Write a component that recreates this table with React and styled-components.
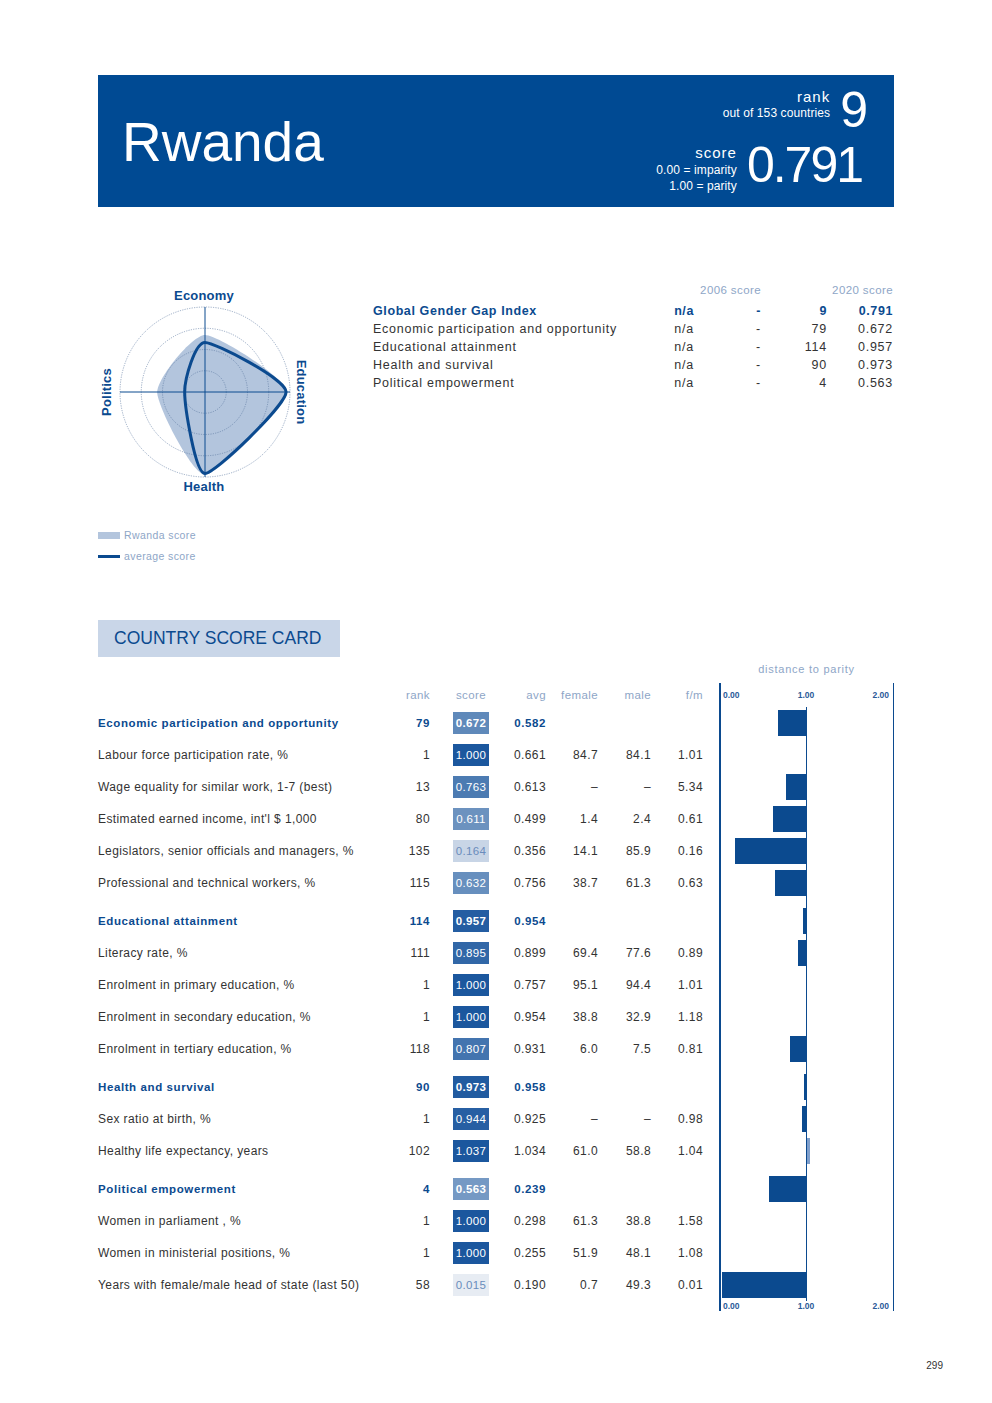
import React from "react";
import styled, { createGlobalStyle } from "styled-components";

const BLUE = "#0b4a8f";
const PALE = "#8ea6c7";

const GlobalStyle = createGlobalStyle`
  body {
    margin: 0;
    background: #fff;
    font-family: "Liberation Sans", Arial, sans-serif;
    color: #333;
  }
`;

const country = { econ: 0.672, edu: 0.957, health: 0.973, pol: 0.563 };
const average = { econ: 0.582, edu: 0.954, health: 0.958, pol: 0.239 };

const overview = [
  ["Global Gender Gap Index", "n/a", "-", "9", "0.791"],
  ["Economic participation and opportunity", "n/a", "-", "79", "0.672"],
  ["Educational attainment", "n/a", "-", "114", "0.957"],
  ["Health and survival", "n/a", "-", "90", "0.973"],
  ["Political empowerment", "n/a", "-", "4", "0.563"],
];

const sections = [
  {
    name: "Economic participation and opportunity",
    rank: 79, score: 0.672, avg: "0.582",
    rows: [
      ["Labour force participation rate, %", 1, 1.0, "0.661", "84.7", "84.1", "1.01"],
      ["Wage equality for similar work, 1-7 (best)", 13, 0.763, "0.613", "–", "–", "5.34"],
      ["Estimated earned income, int'l $ 1,000", 80, 0.611, "0.499", "1.4", "2.4", "0.61"],
      ["Legislators, senior officials and managers, %", 135, 0.164, "0.356", "14.1", "85.9", "0.16"],
      ["Professional and technical workers, %", 115, 0.632, "0.756", "38.7", "61.3", "0.63"],
    ],
  },
  {
    name: "Educational attainment",
    rank: 114, score: 0.957, avg: "0.954",
    rows: [
      ["Literacy rate, %", 111, 0.895, "0.899", "69.4", "77.6", "0.89"],
      ["Enrolment in primary education, %", 1, 1.0, "0.757", "95.1", "94.4", "1.01"],
      ["Enrolment in secondary education, %", 1, 1.0, "0.954", "38.8", "32.9", "1.18"],
      ["Enrolment in tertiary education, %", 118, 0.807, "0.931", "6.0", "7.5", "0.81"],
    ],
  },
  {
    name: "Health and survival",
    rank: 90, score: 0.973, avg: "0.958",
    rows: [
      ["Sex ratio at birth, %", 1, 0.944, "0.925", "–", "–", "0.98"],
      ["Healthy life expectancy, years", 102, 1.037, "1.034", "61.0", "58.8", "1.04"],
    ],
  },
  {
    name: "Political empowerment",
    rank: 4, score: 0.563, avg: "0.239",
    rows: [
      ["Women in parliament , %", 1, 1.0, "0.298", "61.3", "38.8", "1.58"],
      ["Women in ministerial positions, %", 1, 1.0, "0.255", "51.9", "48.1", "1.08"],
      ["Years with female/male head of state (last 50)", 58, 0.015, "0.190", "0.7", "49.3", "0.01"],
    ],
  },
];

const shade = (v) => {
  const t = Math.max(0, Math.min(1, v));
  const light = [234, 238, 244];
  const dark = [27, 87, 158];
  const c = light.map((l, i) => Math.round(l + (dark[i] - l) * t));
  return `rgb(${c.join(",")})`;
};

// closed catmull-rom, softened so the corners stay visible
const smooth = (p, k = 0.6) => {
  const n = p.length;
  let d = `M${p[0][0]},${p[0][1]}`;
  for (let i = 0; i < n; i++) {
    const p0 = p[(i - 1 + n) % n], p1 = p[i], p2 = p[(i + 1) % n], p3 = p[(i + 2) % n];
    const c1 = [p1[0] + ((p2[0] - p0[0]) / 6) * k, p1[1] + ((p2[1] - p0[1]) / 6) * k];
    const c2 = [p2[0] - ((p3[0] - p1[0]) / 6) * k, p2[1] - ((p3[1] - p1[1]) / 6) * k];
    d += ` C${c1[0]},${c1[1]} ${c2[0]},${c2[1]} ${p2[0]},${p2[1]}`;
  }
  return d + " Z";
};

const Page = styled.div`
  width: 992px;
  min-height: 1403px;
  box-sizing: border-box;
  padding: 75px 98px 0;
`;

const Banner = styled.header`
  height: 132px;
  background: #004a93;
  color: #fff;
  display: flex;
  justify-content: space-between;
  align-items: center;
  padding: 0 28px 0 24px;
  box-sizing: border-box;
`;

const Country = styled.h1`
  margin: 0;
  padding-top: 3px;
  font-size: 55px;
  font-weight: 400;
  line-height: 1;
`;

const Stats = styled.div`
  align-self: flex-start;
  padding-top: 13px;
  display: flex;
  flex-direction: column;
  align-items: flex-end;
  gap: 11px;
`;

const StatRow = styled.div`
  display: flex;
  align-items: flex-start;
  gap: 10px;
  margin-right: ${(p) => p.$shift || 0}px;
`;

const StatLabels = styled.div`
  text-align: right;
  padding-top: ${(p) => p.$top || 1}px;
  line-height: ${(p) => p.$lh || 16}px;
`;

const StatName = styled.div`
  font-size: 15px;
  letter-spacing: 1px;
`;

const StatNote = styled.div`
  font-size: 12px;
  letter-spacing: 0.1px;
`;

const BigNumber = styled.div`
  font-size: 50px;
  line-height: 44px;
  letter-spacing: -2px;
`;

const Overview = styled.section`
  margin-top: 75px;
  display: flex;
`;

const RadarColumn = styled.div`
  width: 275px;
  flex: none;
`;

const RadarSvg = styled.svg`
  display: block;
  text {
    font-family: "Liberation Sans", Arial, sans-serif;
    font-size: 13px;
    font-weight: 700;
    fill: ${BLUE};
    letter-spacing: 0.2px;
  }
`;

const Legend = styled.div`
  margin-top: 32px;
  display: flex;
  flex-direction: column;
  gap: 9px;
`;

const LegendItem = styled.div`
  display: flex;
  align-items: center;
  gap: 4px;
  font-size: 10.5px;
  line-height: 12px;
  letter-spacing: 0.4px;
  color: ${PALE};
`;

const Swatch = styled.span`
  width: 22px;
  height: ${(p) => (p.$line ? 3 : 7)}px;
  background: ${(p) => (p.$line ? BLUE : "#b3c5dd")};
`;

const SummaryTable = styled.div`
  flex: 1;
  display: grid;
  grid-template-columns: 1fr 62px 67px 66px 66px;
  grid-template-rows: 20px;
  grid-auto-rows: 18px;
  align-items: center;
  font-size: 12.5px;
  letter-spacing: 0.75px;
  padding-right: 1px;
`;

const SummaryHead = styled.div`
  grid-column: ${(p) => p.$col};
  justify-self: end;
  white-space: nowrap;
  align-self: start;
  font-size: 11.5px;
  letter-spacing: 0.4px;
  line-height: 16px;
  color: ${PALE};
`;

const SummaryCell = styled.div`
  text-align: ${(p) => (p.$left ? "left" : "right")};
  white-space: nowrap;
  font-weight: ${(p) => (p.$strong ? 700 : 400)};
  letter-spacing: ${(p) => (p.$strong ? "0.6px" : "inherit")};
  color: ${(p) => (p.$strong ? BLUE : "#333")};
`;

const CardTitle = styled.h2`
  margin: 58px 0 0;
  width: 242px;
  height: 37px;
  box-sizing: border-box;
  padding-left: 16px;
  display: flex;
  align-items: center;
  background: #c9d6e8;
  color: ${BLUE};
  font-size: 17.5px;
  font-weight: 400;
`;

const DistanceLabel = styled.div`
  margin: 5px 0 0 auto;
  width: 175px;
  text-align: center;
  font-size: 11px;
  line-height: 14px;
  letter-spacing: 0.75px;
  color: ${PALE};
`;

const COLUMNS = "302px 30px 59px 57px 52px 53px 52px 191px";

const Table = styled.div`
  margin-top: 7px;
`;

const Row = styled.div`
  display: grid;
  grid-template-columns: ${COLUMNS};
  height: ${(p) => p.$height}px;
  align-items: end;
`;

const Cell = styled.div`
  height: ${(p) => p.$h || 32}px;
  display: flex;
  align-items: center;
  justify-content: ${(p) => (p.$left ? "flex-start" : "flex-end")};
  white-space: nowrap;
  font-size: ${(p) => (p.$head || p.$strong ? "11.5px" : "12px")};
  letter-spacing: ${(p) => (p.$strong ? "0.6px" : "0.4px")};
  font-weight: ${(p) => (p.$strong ? 700 : 400)};
  color: ${(p) => (p.$head ? PALE : p.$strong ? BLUE : "#333")};
`;

const ScoreSlot = styled.span`
  width: 36px;
  text-align: center;
`;

const ScoreBadge = styled.span`
  width: 36px;
  height: 22px;
  display: flex;
  align-items: center;
  justify-content: center;
  font-size: 11.5px;
  letter-spacing: 0.3px;
  font-weight: ${(p) => (p.$strong ? 700 : 400)};
  background: ${(p) => shade(p.$value)};
  color: ${(p) => (p.$value >= 0.3 ? "#fff" : "#6a8cbc")};
`;

const ChartCell = styled.div`
  align-self: stretch;
  justify-self: end;
  width: 175px;
  box-sizing: border-box;
  border-left: 2px solid ${BLUE};
  border-right: 1px solid ${BLUE};
  display: flex;
  flex-direction: column;
  justify-content: flex-end;
  background: ${(p) =>
    p.$axis
      ? "none"
      : `linear-gradient(to right, transparent 85px, ${BLUE} 85px, ${BLUE} 86px, transparent 86px)`};
`;

const BarTrack = styled.div`
  height: 32px;
  display: flex;
  align-items: center;
`;

const Bar = styled.div`
  flex: none;
  height: 26px;
  background: ${(p) => (p.$over ? "#7f9fcc" : BLUE)};
`;

const AxisLabels = styled.div`
  height: ${(p) => p.$h}px;
  display: flex;
  align-items: center;
  justify-content: space-between;
  padding: 0 4px 0 2px;
  font-size: 8.5px;
  font-weight: 700;
  color: #2a5a98;
`;

const PageNumber = styled.div`
  margin: 49px -49px 0 0;
  text-align: right;
  font-size: 10px;
  line-height: 12px;
  color: #333;
`;

const UNIT = 85.5;

function ChartBar({ value }) {
  if (value === 1) return <BarTrack />;
  const over = value > 1;
  const style = over
    ? { marginLeft: 86, width: (value - 1) * UNIT }
    : { marginLeft: value * UNIT, width: (1 - value) * UNIT };
  return (
    <BarTrack>
      <Bar $over={over} style={style} />
    </BarTrack>
  );
}

function Radar() {
  const cx = 107, cy = 110, R = 85;
  const pts = (v) => [
    [cx, cy - R * v.econ],
    [cx + R * v.edu, cy],
    [cx, cy + R * v.health],
    [cx - R * v.pol, cy],
  ];
  return (
    <RadarSvg width="215" height="215" viewBox="0 0 215 215">
      <path d={smooth(pts(country))} fill="#b3c5dd" />
      {[0.25, 0.5, 0.75, 1].map((f) => (
        <circle key={f} cx={cx} cy={cy} r={R * f} fill="none" stroke="#5b77a0" strokeWidth="0.6" strokeDasharray="1.2 1.2" />
      ))}
      <line x1={cx - R} y1={cy} x2={cx + R} y2={cy} stroke={BLUE} strokeWidth="1" />
      <line x1={cx} y1={cy - R} x2={cx} y2={cy + R} stroke={BLUE} strokeWidth="1" />
      <path d={smooth(pts(average))} fill="none" stroke={BLUE} strokeWidth="3" strokeLinejoin="round" />
      <text x={cx - 1} y={15} textAnchor="middle" dominantBaseline="middle">Economy</text>
      <text x={cx - 1} y={206} textAnchor="middle" dominantBaseline="middle">Health</text>
      <text transform={`translate(10 ${cy}) rotate(-90)`} textAnchor="middle" dominantBaseline="middle">Politics</text>
      <text transform={`translate(202 ${cy}) rotate(90)`} textAnchor="middle" dominantBaseline="middle">Education</text>
    </RadarSvg>
  );
}

function Section({ section, first }) {
  return (
    <>
      <Row $height={first ? 32 : 38}>
        <Cell $left $strong>{section.name}</Cell>
        <Cell $strong>{section.rank}</Cell>
        <Cell><ScoreBadge $strong $value={section.score}>{section.score.toFixed(3)}</ScoreBadge></Cell>
        <Cell $strong>{section.avg}</Cell>
        <Cell />
        <Cell />
        <Cell />
        <ChartCell><ChartBar value={section.score} /></ChartCell>
      </Row>
      {section.rows.map(([label, rank, score, avg, female, male, ratio]) => (
        <Row key={label} $height={32}>
          <Cell $left>{label}</Cell>
          <Cell>{rank}</Cell>
          <Cell><ScoreBadge $value={score}>{score.toFixed(3)}</ScoreBadge></Cell>
          <Cell>{avg}</Cell>
          <Cell>{female}</Cell>
          <Cell>{male}</Cell>
          <Cell>{ratio}</Cell>
          <ChartCell><ChartBar value={score} /></ChartCell>
        </Row>
      ))}
    </>
  );
}

export default function App() {
  return (
    <Page>
      <GlobalStyle />
      <Banner>
        <Country>Rwanda</Country>
        <Stats>
          <StatRow>
            <StatLabels>
              <StatName>rank</StatName>
              <StatNote>out of 153 countries</StatNote>
            </StatLabels>
            <BigNumber>9</BigNumber>
          </StatRow>
          <StatRow $shift={4}>
            <StatLabels $top={2} $lh={16.5}>
              <StatName>score</StatName>
              <StatNote>0.00 = imparity</StatNote>
              <StatNote>1.00 = parity</StatNote>
            </StatLabels>
            <BigNumber>0.791</BigNumber>
          </StatRow>
        </Stats>
      </Banner>

      <Overview>
        <RadarColumn>
          <Radar />
          <Legend>
            <LegendItem><Swatch />Rwanda score</LegendItem>
            <LegendItem><Swatch $line />average score</LegendItem>
          </Legend>
        </RadarColumn>
        <SummaryTable>
          <SummaryHead $col="3">2006 score</SummaryHead>
          <SummaryHead $col="5">2020 score</SummaryHead>
          {overview.map((r, i) =>
            r.map((v, j) => (
              <SummaryCell key={`${i}-${j}`} $left={j === 0} $strong={i === 0}>{v}</SummaryCell>
            ))
          )}
        </SummaryTable>
      </Overview>

      <CardTitle>COUNTRY SCORE CARD</CardTitle>
      <DistanceLabel>distance to parity</DistanceLabel>

      <Table>
        <Row $height={24}>
          <Cell $h={24} />
          <Cell $h={24} $head>rank</Cell>
          <Cell $h={24} $head><ScoreSlot>score</ScoreSlot></Cell>
          <Cell $h={24} $head>avg</Cell>
          <Cell $h={24} $head>female</Cell>
          <Cell $h={24} $head>male</Cell>
          <Cell $h={24} $head>f/m</Cell>
          <ChartCell $axis>
            <AxisLabels $h={24}><span>0.00</span><span>1.00</span><span>2.00</span></AxisLabels>
          </ChartCell>
        </Row>
        {sections.map((s, i) => (
          <Section key={s.name} section={s} first={i === 0} />
        ))}
        <Row $height={10}>
          <Cell $h={10} />
          <Cell $h={10} />
          <Cell $h={10} />
          <Cell $h={10} />
          <Cell $h={10} />
          <Cell $h={10} />
          <Cell $h={10} />
          <ChartCell $axis>
            <AxisLabels $h={10}><span>0.00</span><span>1.00</span><span>2.00</span></AxisLabels>
          </ChartCell>
        </Row>
      </Table>

      <PageNumber>299</PageNumber>
    </Page>
  );
}
